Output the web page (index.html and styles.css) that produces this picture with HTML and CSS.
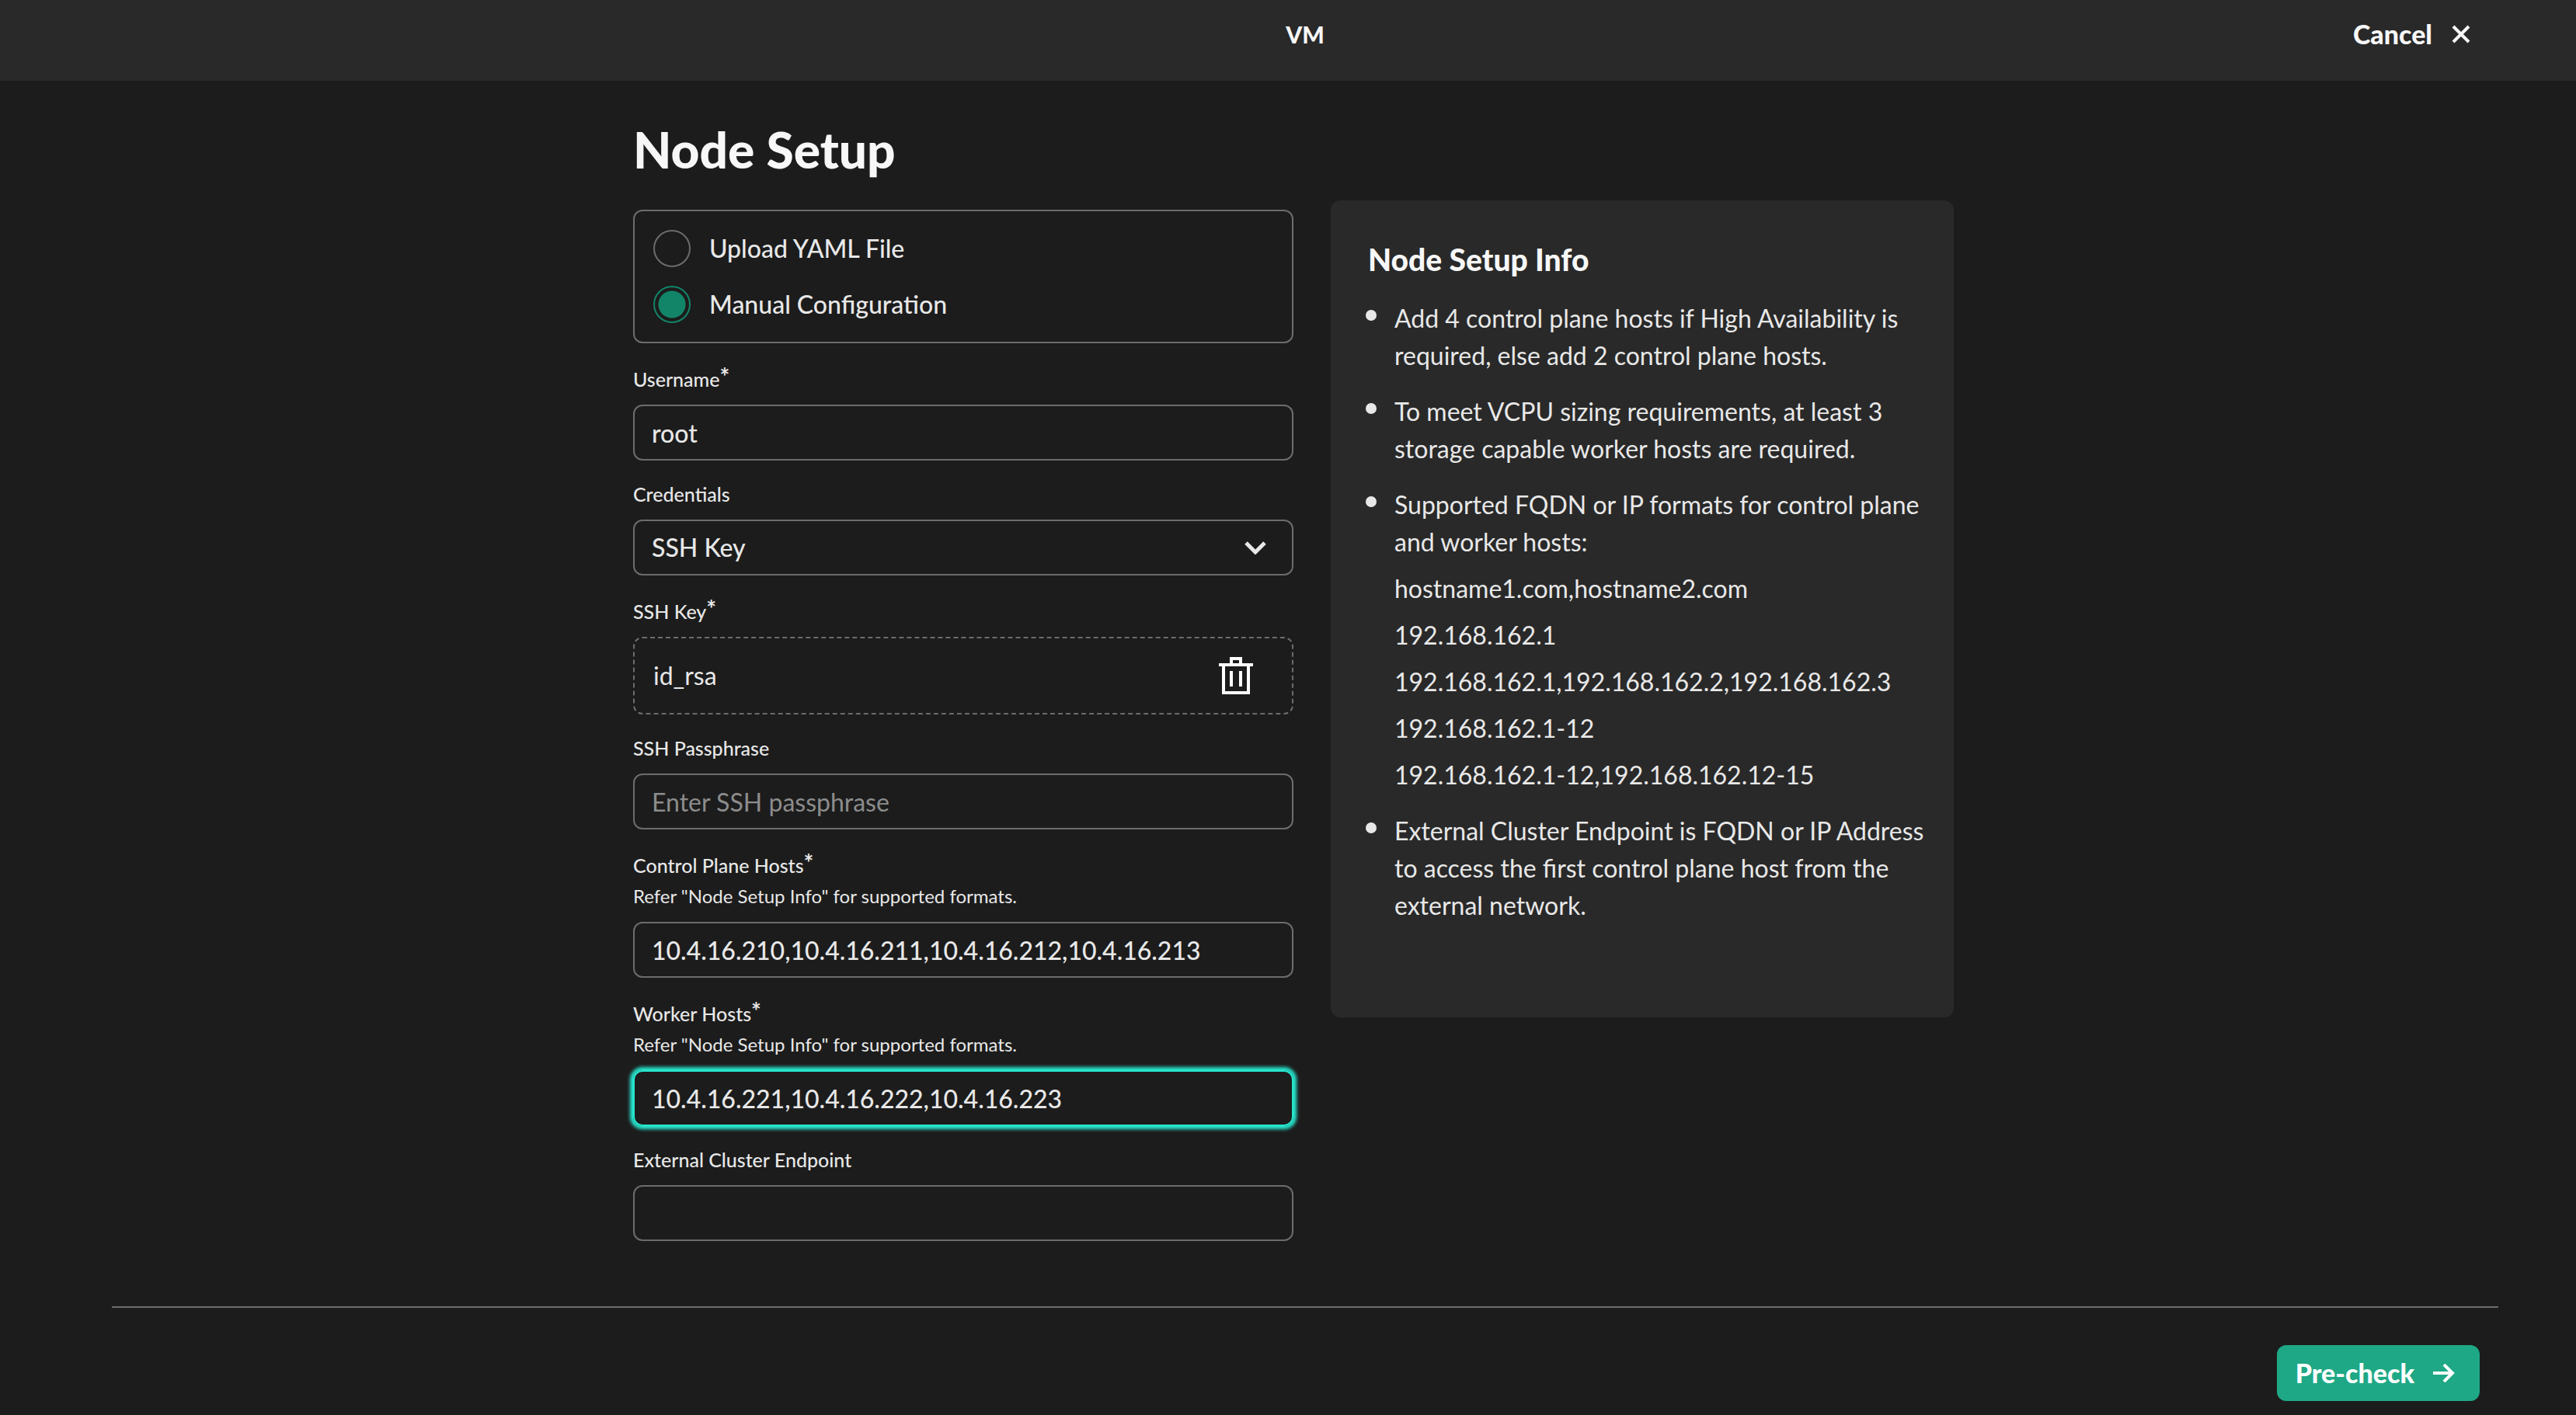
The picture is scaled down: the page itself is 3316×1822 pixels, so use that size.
FILE: index.html
```html
<!DOCTYPE html>
<html lang="en">
<head>
<meta charset="utf-8">
<meta name="viewport" content="width=device-width, initial-scale=1">
<title>VM - Node Setup</title>
<link rel="stylesheet" href="styles.css">
</head>
<body>
<header class="topbar">
  <p class="topbar-title">VM</p>
  <button type="button" class="cancel">Cancel
    <svg class="cancel-icon" viewBox="0 0 24 24" aria-hidden="true"><path d="M2 2l20 20M22 2L2 22"/></svg>
  </button>
</header>
<main class="content">
  <form class="node-form" id="node-form">
    <h1 class="title">Node Setup</h1>
    <div class="radio-group" role="radiogroup" aria-label="Configuration method">
      <label class="radio"><input type="radio" name="method">Upload YAML File</label>
      <label class="radio"><input type="radio" name="method" checked>Manual Configuration</label>
    </div>
    <div class="field">
      <label class="label required" for="username">Username<span class="star">*</span></label>
      <input class="control" id="username" type="text" value="root">
    </div>
    <div class="field">
      <label class="label" for="credentials">Credentials</label>
      <div class="select-wrap">
        <select class="control" id="credentials"><option>SSH Key</option></select>
        <svg class="chevron" viewBox="0 0 28 18" aria-hidden="true"><path d="M2 3l12 12L26 3"/></svg>
      </div>
    </div>
    <div class="field">
      <span class="label required">SSH Key<span class="star">*</span></span>
      <div class="file-box">
        <span>id_rsa</span>
        <button type="button" class="remove" aria-label="Remove file">
          <svg class="trash" viewBox="0 0 44 48" aria-hidden="true"><path d="M6 10v36h32V10M0 10h44M16 10V2h12v8M16 18v20M28 18v20"/></svg>
        </button>
      </div>
    </div>
    <div class="field">
      <label class="label" for="passphrase">SSH Passphrase</label>
      <input class="control" id="passphrase" type="text" placeholder="Enter SSH passphrase">
    </div>
    <div class="field">
      <label class="label required" for="control-hosts">Control Plane Hosts<span class="star">*</span></label>
      <p class="help">Refer "Node Setup Info" for supported formats.</p>
      <input class="control" id="control-hosts" type="text" value="10.4.16.210,10.4.16.211,10.4.16.212,10.4.16.213">
    </div>
    <div class="field">
      <label class="label required" for="worker-hosts">Worker Hosts<span class="star">*</span></label>
      <p class="help">Refer "Node Setup Info" for supported formats.</p>
      <input class="control active" id="worker-hosts" type="text" value="10.4.16.221,10.4.16.222,10.4.16.223">
    </div>
    <div class="field">
      <label class="label" for="endpoint">External Cluster Endpoint</label>
      <input class="control" id="endpoint" type="text">
    </div>
  </form>
  <aside class="info">
    <h2 class="info-title">Node Setup Info</h2>
    <ul class="info-list">
      <li>Add 4 control plane hosts if High Availability is required, else add 2 control plane hosts.</li>
      <li>To meet VCPU sizing requirements, at least 3 storage capable worker hosts are required.</li>
      <li>Supported FQDN or IP formats for control plane and worker hosts:
        <p>hostname1.com,hostname2.com</p>
        <p>192.168.162.1</p>
        <p>192.168.162.1,192.168.162.2,192.168.162.3</p>
        <p>192.168.162.1-12</p>
        <p>192.168.162.1-12,192.168.162.12-15</p>
      </li>
      <li>External Cluster Endpoint is FQDN or IP Address to access the first control plane host from the external network.</li>
    </ul>
  </aside>
</main>
<footer class="actions">
  <button type="submit" form="node-form" class="primary">Pre-check
    <svg class="arrow" viewBox="0 0 28 24" aria-hidden="true"><path d="M0 12h25M14 1l11 11-11 11"/></svg>
  </button>
</footer>
</body>
</html>
```
FILE: styles.css
```css
* {
  box-sizing: border-box;
}

body {
  margin: 0;
  background: #1c1c1c;
  color: #e8e8e8;
  font-family: Lato, "Open Sans", sans-serif;
  font-size: 32px;
  line-height: 48px;
}

h1, h2, p, ul {
  margin: 0;
  padding: 0;
}

button, input, select {
  font: inherit;
  color: inherit;
}

button {
  border: 0;
  background: none;
  cursor: pointer;
}

svg {
  display: block;
  fill: none;
  stroke: currentColor;
}

.topbar {
  display: grid;
  grid-template-columns: 1fr auto 1fr;
  align-items: start;
  height: 104px;
  padding: 20px 136px 0 180px;
  background: #292929;
  color: #f7f7f7;
  font-weight: 900;
}

.topbar-title {
  grid-column: 2;
  font-size: 30px;
}

.cancel {
  display: flex;
  align-items: center;
  justify-self: end;
  gap: 25px;
  padding: 0;
  font-size: 34px;
}

.cancel-icon {
  width: 24px;
  height: 24px;
  stroke-width: 4;
}

.content {
  display: grid;
  grid-template-columns: minmax(0, 850px) minmax(0, 802px);
  justify-content: center;
  align-items: start;
  gap: 48px;
  padding: 53px 100px 84px 114px;
}

.node-form {
  display: flex;
  flex-direction: column;
  gap: 27px;
}

.title {
  margin-bottom: 14px;
  color: #f7f7f7;
  font-size: 64px;
  font-weight: 900;
  line-height: 72px;
}

.radio-group {
  display: flex;
  flex-direction: column;
  gap: 24px;
  padding: 24px;
  border: 2px solid #6c6c6c;
  border-radius: 12px;
  font-weight: 500;
}

.radio {
  display: flex;
  align-items: center;
  gap: 24px;
}

.radio input {
  appearance: none;
  width: 48px;
  height: 48px;
  margin: 0;
  border: 2px solid #6c6c6c;
  border-radius: 50%;
}

.radio input:checked {
  border-color: #128569;
  background: radial-gradient(circle, #128569 0 17px, transparent 18px);
}

.field {
  display: flex;
  flex-direction: column;
}

.label {
  margin-bottom: 17px;
  font-size: 25px;
  font-weight: 500;
  line-height: 32px;
}

.label.required {
  padding-top: 3px;
}

.star {
  display: inline-block;
  height: 24px;
  font-size: 30px;
  font-weight: 700;
  line-height: 24px;
  vertical-align: top;
}

.label:has(+ .help) {
  margin-bottom: 8px;
}

.help {
  margin-bottom: 17px;
  font-size: 24px;
  line-height: 32px;
}

.control {
  display: block;
  width: 100%;
  height: 72px;
  padding: 0 22px;
  border: 2px solid #6c6c6c;
  border-radius: 12px;
  outline: 0;
  background: transparent;
  font-weight: 500;
}

.control::placeholder {
  color: #8c8c8c;
  font-weight: 400;
  opacity: 1;
}

.control.active {
  border-color: #27e8d0;
  box-shadow: 0 0 4px 4px #27e8d0;
}

.select-wrap {
  display: grid;
  align-items: center;
}

.select-wrap > * {
  grid-area: 1 / 1;
}

.select-wrap select {
  appearance: none;
}

.chevron {
  justify-self: end;
  width: 28px;
  height: 18px;
  margin-right: 35px;
  stroke-width: 5;
  pointer-events: none;
}

.file-box {
  display: flex;
  align-items: center;
  justify-content: space-between;
  height: 100px;
  padding: 0 50px 0 24px;
  border: 2px dashed #6c6c6c;
  border-radius: 12px;
}

.remove {
  padding: 0;
  color: #ffffff;
}

.trash {
  width: 44px;
  height: 48px;
  stroke-width: 4;
}

.info {
  margin-top: 101px;
  padding: 52px 32px 120px 48px;
  border-radius: 12px;
  background: #292929;
}

.info-title {
  margin-bottom: 28px;
  color: #f7f7f7;
  font-size: 39px;
  font-weight: 900;
  line-height: 48px;
}

.info-list {
  display: flex;
  flex-direction: column;
  gap: 24px;
  list-style: none;
}

.info-list li {
  position: relative;
  padding-left: 34px;
}

.info-list li::before {
  content: "";
  position: absolute;
  top: 13px;
  left: -3px;
  width: 14px;
  height: 14px;
  border-radius: 50%;
  background: #e8e8e8;
}

.info-list p {
  margin-top: 12px;
}

.actions {
  display: flex;
  justify-content: flex-end;
  margin: 0 100px 0 144px;
  padding: 48px 24px 18px;
  border-top: 2px solid #6c6c6c;
}

.primary {
  display: flex;
  align-items: center;
  gap: 24px;
  height: 72px;
  padding: 0 32px 0 24px;
  border-radius: 12px;
  background: #1ea885;
  color: #ffffff;
  font-size: 34px;
  font-weight: 900;
}

.arrow {
  width: 28px;
  height: 24px;
  stroke-width: 4;
}
```
